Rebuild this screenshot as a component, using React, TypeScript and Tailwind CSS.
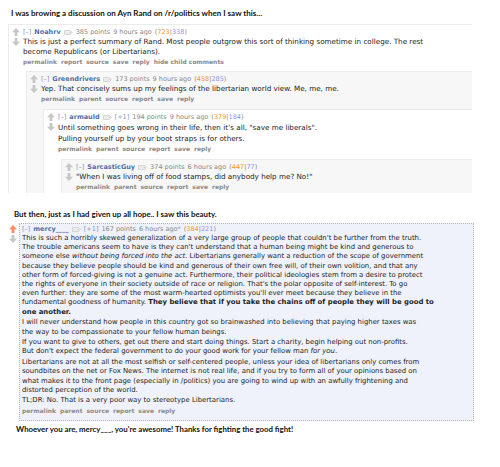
import type { ReactNode } from 'react';

// Reddit-style screenshot: a nested /r/politics thread, then a highlighted reply.

const BODY_FONT = "font-['DejaVu_Sans',Verdana,sans-serif]";
const CAPTION_FONT = "font-['Lato','Open_Sans',sans-serif]";

function UpArrow({ on = false }: { on?: boolean }): JSX.Element {
  return (
    <svg width="8" height="8" viewBox="0 0 8 8" className="block">
      <path d="M4 0 L8 4.2 H5.4 V8 H2.6 V4.2 H0 Z" fill={on ? '#ff8b60' : '#c6c6c6'} />
    </svg>
  );
}

function DownArrow(): JSX.Element {
  return (
    <svg width="8" height="8" viewBox="0 0 8 8" className="block">
      <path d="M4 8 L8 3.8 H5.4 V0 H2.6 V3.8 H0 Z" fill="#c6c6c6" />
    </svg>
  );
}

// RES user-tag glyph next to the author name
function TagIcon(): JSX.Element {
  return (
    <svg width="9" height="5" viewBox="0 0 9 5" className="inline-block align-middle">
      <path d="M0.5 0.5 H6.5 L8.5 2.5 L6.5 4.5 H0.5 Z" fill="#ececec" stroke="#cfcfcf" strokeWidth="0.8" />
      <circle cx="6.3" cy="2.5" r="0.6" fill="#bbb" />
    </svg>
  );
}

type Meta = {
  author: string;
  plus?: boolean;
  points: number;
  ago: string;
  ups: number;
  downs: number;
};

function Tagline({ m, leading = 'leading-[10px]' }: { m: Meta; leading?: string }): JSX.Element {
  return (
    <div className={`flex items-center gap-[3px] whitespace-nowrap text-[6.5px] ${leading} text-[#888]`}>
      <span className="text-[#8795b8]">[–]</span>
      <span className="font-bold text-[#4f6fa6]">{m.author}</span>
      <TagIcon />
      {m.plus === true && <span className="text-[#8795b8]">[+1]</span>}
      <span>{m.points} points</span>
      <span>{m.ago}</span>
      <span>
        (<span className="text-[#f7931e]">{m.ups}</span>|<span className="text-[#8f8ff0]">{m.downs}</span>)
      </span>
    </div>
  );
}

function Links({ items }: { items: string[] }): JSX.Element {
  return (
    <div className="flex gap-[4px] whitespace-nowrap text-[6px] font-bold leading-[10px] text-[#8a8a8a]">
      {items.map((l) => (
        <span key={l}>{l}</span>
      ))}
    </div>
  );
}

const CHILD_LINKS = ['permalink', 'parent', 'source', 'report', 'save', 'reply'];

function Comment({
  m,
  lines,
  links,
  shade,
  indent,
  bodyLeading = 'leading-[10px]',
  children,
}: {
  m: Meta;
  lines: ReactNode[];
  links: string[];
  shade: string;
  indent: string;
  bodyLeading?: string;
  children?: ReactNode;
}): JSX.Element {
  return (
    <div className={`${indent} border-t border-l border-[#ebebeb] ${shade}`}>
      <div className="flex pt-[2px]">
        <div className="flex w-[14px] shrink-0 flex-col items-center gap-[2px] pt-[1px]">
          <UpArrow />
          <DownArrow />
        </div>
        <div className="min-w-0 flex-1">
          <Tagline m={m} />
          <div className={`whitespace-nowrap text-[7.2px] ${bodyLeading} text-[#222]`}>
            {lines.map((l, i) => (
              <div key={i}>{l}</div>
            ))}
          </div>
          <Links items={links} />
          {children}
        </div>
      </div>
    </div>
  );
}

function Para({ children, last = false }: { children: ReactNode; last?: boolean }): JSX.Element {
  return <div className={last ? '' : 'mb-[1.5px]'}>{children}</div>;
}

export default function App(): JSX.Element {
  return (
    <div className={`h-[467px] w-[500px] overflow-hidden bg-white ${BODY_FONT}`}>
      <div className={`flex h-[24px] items-center pl-[11px] pt-[2px] text-[8px] font-bold text-[#111] ${CAPTION_FONT}`}>
        I was browing a discussion on Ayn Rand on /r/politics when I saw this...
      </div>

      <div className="h-[169px] w-[472px] overflow-hidden">
        <Comment
          m={{ author: 'Noahrv', points: 385, ago: '9 hours ago', ups: 723, downs: 338 }}
          lines={[
            'This is just a perfect summary of Rand. Most people outgrow this sort of thinking sometime in college. The rest',
            'become Republicans (or Libertarians).',
          ]}
          links={['permalink', 'report', 'source', 'save', 'reply', 'hide child comments']}
          shade="bg-white"
          indent="ml-[8px]"
        >
          <div className="mt-[4px]">
            <Comment
              m={{ author: 'Greendrivers', points: 173, ago: '9 hours ago', ups: 458, downs: 285 }}
              lines={['Yep. That concisely sums up my feelings of the libertarian world view. Me, me, me.']}
              links={CHILD_LINKS}
              shade="bg-[#f7f7f7]"
              indent="ml-[3px]"
            >
              <div className="mt-[5px]">
                <Comment
                  m={{ author: 'armauld', plus: true, points: 194, ago: '9 hours ago', ups: 379, downs: 184 }}
                  lines={[
                    'Until something goes wrong in their life, then it\u2019s all, "save me liberals".',
                    'Pulling yourself up by your boot straps is for others.',
                  ]}
                  links={CHILD_LINKS}
                  shade="bg-white"
                  indent="ml-[2px]"
                  bodyLeading="leading-[11px]"
                >
                  <div className="mt-[5px]">
                    <Comment
                      m={{ author: 'SarcasticGuy', points: 374, ago: '6 hours ago', ups: 447, downs: 77 }}
                      lines={['"When I was living off of food stamps, did anybody help me? No!"']}
                      links={CHILD_LINKS}
                      shade="bg-[#f7f7f7] pb-[6px]"
                      indent="ml-[3px]"
                    />
                  </div>
                </Comment>
              </div>
            </Comment>
          </div>
        </Comment>
      </div>

      <div className={`flex h-[30px] items-end pb-[2px] pl-[14px] text-[7.9px] font-bold text-[#111] ${CAPTION_FONT}`}>
        But then, just as I had given up all hope.. I saw this beauty.
      </div>

      <div className="flex">
        <div className="ml-[9px] flex w-[10px] shrink-0 flex-col items-start gap-[2px] pt-[2px]">
          <UpArrow on />
          <DownArrow />
        </div>
        <div className="mr-[26px] min-w-0 flex-1 border border-dotted border-[#b4b4b4] bg-[#eff2fb] pb-[4px] pl-[2px] pt-px">
          <div className="flex items-center gap-[3px] whitespace-nowrap text-[6.5px] leading-[9px] text-[#888]">
            <span className="text-[#8795b8]">[–]</span>
            <span className="font-bold text-[#4f6fa6]">mercy____</span>
            <TagIcon />
            <span className="text-[#8795b8]">[+1]</span>
            <span>167 points</span>
            <span>6 hours ago*</span>
            <span>
              (<span className="text-[#f7931e]">384</span>|<span className="text-[#8f8ff0]">221</span>)
            </span>
          </div>
          <div className="whitespace-nowrap text-[6.9px] leading-[9.2px] text-[#222]">
            <Para>
              This is such a horribly skewed generalization of a very large group of people that couldn't be further from the truth.
              <br />
              The trouble americans seem to have is they can't understand that a human being might be kind and generous to
              <br />
              someone else <em>without being forced into the act</em>. Libertarians generally want a reduction of the scope of government
              <br />
              because they believe people should be kind and generous of their own free will, of their own volition, and that any
              <br />
              other form of forced-giving is not a genuine act. Furthermore, their political ideologies stem from a desire to protect
              <br />
              the rights of everyone in their society outside of race or religion. That's the polar opposite of self-interest. To go
              <br />
              even further: they are some of the most warm-hearted optimists you'll ever meet because they believe in the
              <br />
              fundamental goodness of humanity.{' '}
              <strong>
                They believe that if you take the chains off of people they will be good to
                <br />
                one another.
              </strong>
            </Para>
            <Para>
              I will never understand how people in this country got so brainwashed into believing that paying higher taxes was
              <br />
              the way to be compassionate to your fellow human beings.
            </Para>
            <Para>
              If you want to give to others, get out there and start doing things. Start a charity, begin helping out non-profits.
              <br />
              But don't expect the federal government to do your good work for your fellow man <em>for you</em>.
            </Para>
            <Para>
              Libertarians are not at all the most selfish or self-centered people, unless your idea of libertarians only comes from
              <br />
              soundbites on the net or Fox News. The internet is not real life, and if you try to form all of your opinions based on
              <br />
              what makes it to the front page (especially in /politics) you are going to wind up with an awfully frightening and
              <br />
              distorted perception of the world.
            </Para>
            <Para last>TL;DR: No. That is a very poor way to stereotype Libertarians.</Para>
          </div>
          <div className="flex gap-[4px] whitespace-nowrap text-[6px] font-bold leading-[10px] text-[#8a8a8a]">
            {CHILD_LINKS.map((l) => (
              <span key={l}>{l}</span>
            ))}
          </div>
        </div>
      </div>

      <div className={`pl-[16px] pt-[1px] text-[7.8px] font-bold leading-[14px] text-[#111] ${CAPTION_FONT}`}>
        Whoever you are, mercy___, you're awesome! Thanks for fighting the good fight!
      </div>
    </div>
  );
}
